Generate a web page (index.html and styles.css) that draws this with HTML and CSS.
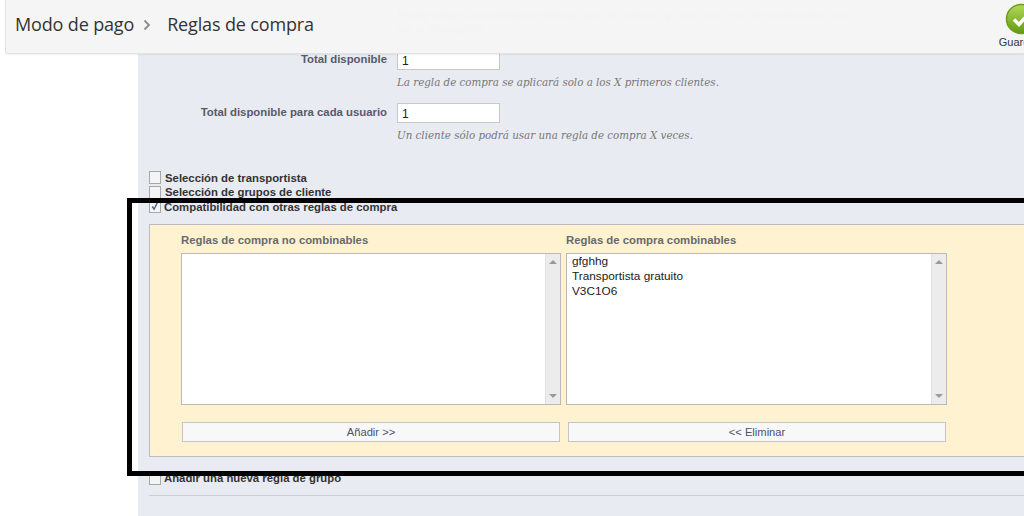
FILE: index.html
```html
<!DOCTYPE html>
<html lang="es">
<head>
<meta charset="utf-8">
<title>Reglas de compra</title>
<link rel="stylesheet" href="styles.css">
</head>
<body>
<header class="topbar">
  <div class="crumbs">
    <span class="crumb">Modo de pago</span>
    <svg class="crumb-sep" width="8" height="12" viewBox="0 0 8 12"><path d="M1.500 1.500 6 6l-4.500 4.500" fill="none" stroke="#8a8a8a" stroke-width="1.800"/></svg>
    <span class="crumb">Reglas de compra</span>
  </div>
  <div class="save">
    <svg class="save-icon" width="32" height="32" viewBox="0 0 32 32">
      <defs><linearGradient id="g" x1="0" y1="0" x2="0" y2="1"><stop offset="0" stop-color="#b5d95a"/><stop offset="1" stop-color="#5f9a12"/></linearGradient></defs>
      <circle cx="16" cy="16" r="14.500" fill="url(#g)" stroke="#6d9c1e" stroke-width="1.500"/>
      <path d="M9 16.500l5 5 9-10" fill="none" stroke="#fff" stroke-width="3.500"/>
    </svg>
    <span class="save-label">Guardar</span>
  </div>
</header>

<main class="page">
  <div class="row-hint row-hint-top">
    <p class="hint hint-wide">Puede elegir una cantidad mínima para la compra, ya sea con o sin los impuestos, con o sin el transporte.</p>
  </div>
  <div class="row">
    <label class="row-label">Total disponible</label>
    <input class="field" type="text" value="1">
  </div>
  <div class="row-hint"><p class="hint">La regla de compra se aplicará solo a los X primeros clientes.</p></div>
  <div class="row">
    <label class="row-label">Total disponible para cada usuario</label>
    <input class="field" type="text" value="1">
  </div>
  <div class="row-hint"><p class="hint">Un cliente sólo podrá usar una regla de compra X veces.</p></div>

  <div class="checks">
    <div class="check"><span class="box"></span><span>Selección de transportista</span></div>
    <div class="check"><span class="box"></span><span>Selección de grupos de cliente</span></div>
    <div class="check check-tight"><span class="box"><svg width="11" height="11" viewBox="0 0 11 11"><path d="M2.500 5.500l2 3 3.500-7" fill="none" stroke="#4a5a9a" stroke-width="1.500"/></svg></span><span>Compatibilidad con otras reglas de compra</span></div>
  </div>

  <section class="combo">
    <div class="combo-cols">
      <div class="col">
        <h3 class="col-title">Reglas de compra no combinables</h3>
        <div class="listbox">
          <ul class="options"></ul>
          <div class="scroll"><span class="arrow-up"></span><span class="arrow-down"></span></div>
        </div>
      </div>
      <div class="col col-right">
        <h3 class="col-title">Reglas de compra combinables</h3>
        <div class="listbox">
          <ul class="options">
            <li>gfghhg</li>
            <li>Transportista gratuito</li>
            <li>V3C1O6</li>
          </ul>
          <div class="scroll"><span class="arrow-up"></span><span class="arrow-down"></span></div>
        </div>
      </div>
    </div>
    <div class="combo-actions">
      <button class="btn" type="button">Añadir &gt;&gt;</button>
      <button class="btn" type="button">&lt;&lt; Eliminar</button>
    </div>
  </section>

  <div class="check check-tight check-last"><span class="box"></span><span>Añadir una nueva regla de grupo</span></div>
  <hr class="rule">
</main>

<div class="annotation"></div>
</body>
</html>
```
FILE: styles.css
```css
* { box-sizing: border-box; }
html, body { margin: 0; height: 516px; overflow: hidden; background: #fff; }
body { font-family: "Liberation Sans", Arial, sans-serif; position: relative; }

.topbar {
  position: absolute; left: 5px; top: 0; right: 0; height: 54px;
  display: flex; justify-content: space-between;
  background: rgba(245,245,245,.98);
  border: 1px solid #e2e2e2; border-top: 0; border-right: 0;
  box-shadow: 0 1px 2px rgba(0,0,0,.06);
  border-radius: 0 0 0 3px;
}
.crumbs { display: flex; align-items: center; padding: 0 0 5px 9px; }
.crumb { font-size: 18px; color: #333; font-family: "Open Sans", sans-serif; letter-spacing: -.15px; }
.crumb-sep { margin: 2px 16px 0 9px; }
.save { width: 42px; margin-right: -17px; flex: none; display: flex; flex-direction: column; align-items: center; padding-top: 3px; }
.save-icon { display: block; margin-left: 2px; }
.save-label { font-size: 11px; color: #333; margin-top: 1px; margin-left: -2px; }

.page {
  margin-left: 138px; height: 516px; background: #e9ebf2;
  padding: 8px 0 0 11px; color: #585a69;
}
.row { display: flex; align-items: center; height: 20px; }
.row-label { width: 239px; text-align: right; font-size: 11.350px; font-weight: bold; padding-right: 1px; margin-top: -3px; }
.field {
  margin-left: 9px; width: 103px; height: 20px; padding: 1px 4px 0;
  border: 1px solid #c8c8c8; background: #fff; font: 12px "Liberation Sans", sans-serif; color: #222;
}
.row-hint { padding-left: 248px; height: 33px; }
.row-hint-top { height: 42px; }
.hint { margin: 0; padding-top: 5px; font: italic 10.300px/14px "DejaVu Serif", serif; color: #777; }
.hint-wide { width: 470px; padding-top: 0; }

.checks { margin-top: 14.500px; }
.check { display: flex; align-items: center; gap: 4px; height: 14.500px; font-size: 11.350px; font-weight: bold; color: #333; }
.check-tight { gap: 3px; }
.box {
  width: 12px; height: 13px; flex: none; background: #f4f4f4;
  border: 1px solid #a8a8a8; display: flex; align-items: center; justify-content: center;
}
.combo {
  margin-top: 10px; height: 233px; margin-right: -1px;
  background: #fff2d0; border: 1px solid #bcbcbc; border-right: 0;
  padding: 9px 0 0 31px;
}
.combo-cols { display: flex; gap: 5px; }
.col { width: 380px; }
.col-right { width: 381px; }
.col-title { margin: 0 0 6px; font-size: 11.350px; line-height: 13px; font-weight: bold; color: #666a6e; }
.listbox { display: flex; height: 152px; background: #fff; border: 1px solid #b9b9b9; }
.options { flex: 1; margin: 0; padding: 0 0 0 5px; list-style: none; font-size: 11.800px; line-height: 15px; color: #222; }
.scroll {
  width: 15px; background: #ececec; border-left: 1px solid #e0e0e0;
  display: flex; flex-direction: column; justify-content: space-between; align-items: center; padding: 6px 0;
}
.arrow-up, .arrow-down { width: 0; height: 0; border-left: 4px solid transparent; border-right: 4px solid transparent; }
.arrow-up { border-bottom: 4px solid #9a9a9a; }
.arrow-down { border-top: 4px solid #9a9a9a; }

.combo-actions { display: flex; gap: 8px; margin: 17px 0 0 1px; }
.btn {
  width: 378px; height: 20px; padding: 0;
  background: #f8f8f8; border: 1px solid #c4c4c4;
  font: 11.200px "Liberation Sans", sans-serif; color: #4e5070;
}
.check-last { margin-top: 14px; }
.rule { border: 0; border-top: 1px solid #cfd0d4; margin: 9px 0 0; }

.annotation {
  position: absolute; left: 127px; top: 198px; width: 920px; height: 278px;
  border: 5px solid #000; pointer-events: none;
}
```
